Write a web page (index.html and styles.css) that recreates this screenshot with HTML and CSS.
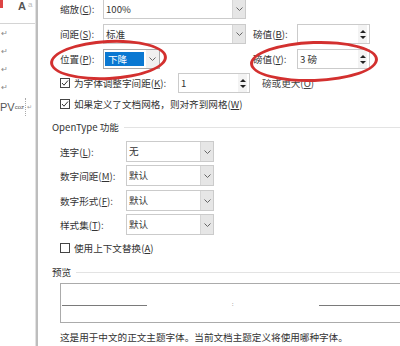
FILE: index.html
```html
<!DOCTYPE html>
<html>
<head>
    <meta charset="utf-8">
    <link rel="stylesheet" href="styles.css">
</head>
<body>
    <div class="page">
        <div class="doc">
            <div class="doc-top">
                <span class="tb-red"></span>
                <span class="tb-a">A</span>
                <span class="tb-b">a</span>
            </div>
            <div class="para">↵</div>
            <div class="para">↵</div>
            <div class="para">↵</div>
            <div class="para">↵</div>
            <div class="para pv">PV<sub>coz</sub><span class="dots"></span><span class="mark">↵</span></div>
        </div>
        <div class="split"></div>

        <div class="dialog">
            <div class="row r1">
                <span class="label">缩放(<u>C</u>):</span>
                <div class="combo wide"><span class="value">100%</span><span class="drop"><svg width="7" height="4" viewBox="0 0 7 4"><polyline points="0.5,0.5 3.5,3.5 6.5,0.5" fill="none" stroke="#666" stroke-width="1"/></svg></span></div>
            </div>
            <div class="row r2">
                <span class="label">间距(<u>S</u>):</span>
                <div class="combo wide"><span class="value">标准</span><span class="drop"><svg width="7" height="4" viewBox="0 0 7 4"><polyline points="0.5,0.5 3.5,3.5 6.5,0.5" fill="none" stroke="#666" stroke-width="1"/></svg></span></div>
                <span class="label side">磅值(<u>B</u>):</span>
                <div class="spin"><span class="value"></span><span class="arrows"><i class="up"></i><i class="down"></i></span></div>
            </div>
            <div class="row r3">
                <span class="label">位置(<u>P</u>):</span>
                <div class="cell">
                    <div class="combo narrow"><span class="value picked">下降</span><span class="drop plain"><svg width="7" height="4" viewBox="0 0 7 4"><polyline points="0.5,0.5 3.5,3.5 6.5,0.5" fill="none" stroke="#666" stroke-width="1"/></svg></span></div>
                </div>
                <span class="label side">磅值(<u>Y</u>):</span>
                <div class="spin"><span class="value">3 磅</span><span class="arrows"><i class="up"></i><i class="down"></i></span></div>
            </div>
            <div class="row r4">
                <span class="check"><svg width="8" height="8" viewBox="0 0 8 8"><polyline points="1,4 3,6.2 7,1.5" fill="none" stroke="#333" stroke-width="1"/></svg></span>
                <span class="clabel">为字体调整字间距(<u>K</u>):</span>
                <div class="spin small"><span class="value">1</span><span class="arrows"><i class="up"></i><i class="down"></i></span></div>
                <span class="after">磅或更大(<u>O</u>)</span>
            </div>
            <div class="row r5">
                <span class="check"><svg width="8" height="8" viewBox="0 0 8 8"><polyline points="1,4 3,6.2 7,1.5" fill="none" stroke="#333" stroke-width="1"/></svg></span>
                <span>如果定义了文档网格，则对齐到网格(<u>W</u>)</span>
            </div>

            <div class="heading h-open">OpenType 功能</div>

            <div class="row sel s1">
                <span class="label otl">连字(<u>L</u>):</span>
                <div class="combo mid"><span class="value">无</span><span class="drop"><svg width="7" height="4" viewBox="0 0 7 4"><polyline points="0.5,0.5 3.5,3.5 6.5,0.5" fill="none" stroke="#666" stroke-width="1"/></svg></span></div>
            </div>
            <div class="row sel s2">
                <span class="label otl">数字间距(<u>M</u>):</span>
                <div class="combo mid"><span class="value">默认</span><span class="drop"><svg width="7" height="4" viewBox="0 0 7 4"><polyline points="0.5,0.5 3.5,3.5 6.5,0.5" fill="none" stroke="#666" stroke-width="1"/></svg></span></div>
            </div>
            <div class="row sel s3">
                <span class="label otl">数字形式(<u>F</u>):</span>
                <div class="combo mid"><span class="value">默认</span><span class="drop"><svg width="7" height="4" viewBox="0 0 7 4"><polyline points="0.5,0.5 3.5,3.5 6.5,0.5" fill="none" stroke="#666" stroke-width="1"/></svg></span></div>
            </div>
            <div class="row sel s4">
                <span class="label otl">样式集(<u>T</u>):</span>
                <div class="combo mid"><span class="value">默认</span><span class="drop"><svg width="7" height="4" viewBox="0 0 7 4"><polyline points="0.5,0.5 3.5,3.5 6.5,0.5" fill="none" stroke="#666" stroke-width="1"/></svg></span></div>
            </div>
            <div class="row r6">
                <span class="check"></span>
                <span>使用上下文替换(<u>A</u>)</span>
            </div>

            <div class="heading h-prev">预览</div>
            <div class="preview">
                <span class="base left"></span>
                <span class="tiny">:</span>
                <span class="base right"></span>
            </div>
            <div class="caption">这是用于中文的正文主题字体。当前文档主题定义将使用哪种字体。</div>
        </div>

        <!-- hand drawn marks over the dialog -->
        <div class="ring ring-left"></div>
        <div class="ring ring-right"></div>
    </div>
</body>
</html>
```

FILE: styles.css
```css
body {
    margin: 0;
    padding: 0;
    background-color: #fff;
    font-family: "Noto Sans CJK SC", "Liberation Sans", sans-serif;
    font-size: 9.6px;
    color: #333;
}

u {
    text-decoration: underline;
    text-underline-offset: 1px;
}

.page {
    position: relative;
    display: flex;
    width: 400px;
    height: 346px;
    overflow: hidden;
}

/* document strip on the left */
.doc {
    width: 35px;
    flex: none;
    color: #888;
}

.doc-top {
    display: flex;
    align-items: flex-start;
    height: 23px;
    border-bottom: 1px solid #d4d4d4;
}

.tb-red {
    width: 3px;
    height: 8px;
    background-color: #d44;
}

.tb-a {
    margin-left: 15px;
    font-family: "Liberation Sans", sans-serif;
    font-size: 11px;
    line-height: 12px;
    font-weight: bold;
    color: #555;
}

.tb-b {
    margin-left: 2px;
    font-family: "Liberation Sans", sans-serif;
    font-size: 8px;
    line-height: 10px;
    color: #bbb;
}

.para {
    height: 18px;
    line-height: 18px;
    font-size: 8px;
    padding-left: 1px;
}

.pv {
    display: flex;
    align-items: center;
    height: 22px;
    padding-left: 0;
    font-family: "Liberation Sans", sans-serif;
    font-size: 11px;
    color: #555;
}

.pv sub {
    font-size: 6px;
    vertical-align: -2px;
}

.dots {
    width: 1px;
    height: 18px;
    margin-left: 1px;
    border-left: 1px dotted #aaa;
}

.mark {
    font-size: 6px;
    color: #999;
}

.split {
    width: 2px;
    flex: none;
    border-left: 1px solid #e2e2e2;
    background-color: #bdbdbd;
}

/* dialog */
.dialog {
    flex: 1;
    padding-left: 14px;
}

.row {
    display: flex;
    align-items: center;
    height: 20px;
    padding-left: 8px;
    white-space: nowrap;
}

.r1 { margin-top: -1px; }
.r2 { margin-top: 5px; }
.r3 { margin-top: 5px; }
.r4 { margin-top: 4px; }
.r5 { margin-top: 1px; }

.label {
    width: 43px;
    flex: none;
}

.label.side {
    width: 44px;
    margin-left: 7px;
}

.label.otl {
    width: 66px;
}

.combo {
    display: flex;
    height: 20px;
    box-sizing: border-box;
    border: 1px solid #cbcbcb;
    background-color: #fff;
    flex: none;
}

.combo.wide { width: 143px; }
.combo.narrow { width: 57px; border-color: #a9a9a9; }
.combo.mid { width: 88px; height: 21px; }

.value {
    flex: 1;
    padding-left: 2px;
    line-height: 18px;
    color: #333;
}

.value.picked {
    flex: none;
    width: 36px;
    margin: 2px 1px 2px 1px;
    padding-left: 3px;
    line-height: 14px;
    background-color: #0a78d2;
    color: #fff;
}

.drop {
    display: flex;
    align-items: center;
    justify-content: center;
    width: 12px;
    border-left: 1px solid #d6d6d6;
    background-color: #e6e6e6;
}

.drop.plain {
    width: 13px;
    margin-left: 1px;
    border-left: none;
    background-color: #f0f0f0;
}

.cell {
    width: 143px;
    flex: none;
}

.spin {
    display: flex;
    width: 73px;
    height: 20px;
    box-sizing: border-box;
    border: 1px solid #cbcbcb;
    flex: none;
}

.spin.small { width: 72px; }

.arrows {
    display: flex;
    flex-direction: column;
    justify-content: center;
    gap: 3px;
    width: 9px;
    margin-right: 2px;
    background-color: #f3f3f3;
}

.arrows i {
    display: block;
    width: 0;
    height: 0;
    margin: 0 auto;
    border-left: 3px solid transparent;
    border-right: 3px solid transparent;
}

.arrows .up { border-bottom: 3px solid #222; }
.arrows .down { border-top: 3px solid #222; }

.check {
    display: flex;
    align-items: center;
    justify-content: center;
    width: 10px;
    height: 10px;
    box-sizing: border-box;
    border: 1px solid #444;
    margin-right: 4px;
    flex: none;
}

.clabel {
    width: 104px;
    flex: none;
}

.after {
    margin-left: 12px;
    color: #444;
}

/* sections */
.heading {
    display: flex;
    align-items: center;
    height: 20px;
    white-space: nowrap;
}

.heading::after {
    content: "";
    flex: 1;
    margin-left: 5px;
    border-top: 1px solid #e3e3e3;
}

.h-open { margin-top: 3px; }
.h-prev { margin-top: 4px; }

.s1 { margin-top: 4px; height: 21px; }
.s2 { margin-top: 3px; height: 21px; }
.s3 { margin-top: 4px; height: 21px; }
.s4 { margin-top: 3px; height: 21px; }
.r6 { margin-top: 3px; }

.preview {
    display: flex;
    align-items: flex-start;
    width: 345px;
    height: 40px;
    box-sizing: border-box;
    margin-top: 1px;
    margin-left: 8px;
    padding: 21px 0 0 1px;
    border: 1px solid #ababab;
    border-right: none;
}

.base {
    height: 0;
    border-top: 1px solid #7a7a7a;
}

.base.left { width: 85px; }
.base.right { flex: 1; margin-left: 86px; }

.tiny {
    margin-left: 85px;
    margin-top: -5px;
    font-size: 5px;
    line-height: 8px;
    color: #777;
}

.caption {
    height: 20px;
    line-height: 20px;
    margin-top: 4px;
    padding-left: 8px;
    white-space: nowrap;
}

/* red marker circles */
.ring {
    position: absolute;
    box-sizing: border-box;
    border: 3px solid #d3302f;
    border-radius: 50%;
}

.ring-left {
    left: 50px;
    top: 40px;
    width: 117px;
    height: 40px;
    transform: rotate(-3deg);
}

.ring-right {
    left: 250px;
    top: 41px;
    width: 128px;
    height: 41px;
    transform: rotate(-2deg);
}
```
